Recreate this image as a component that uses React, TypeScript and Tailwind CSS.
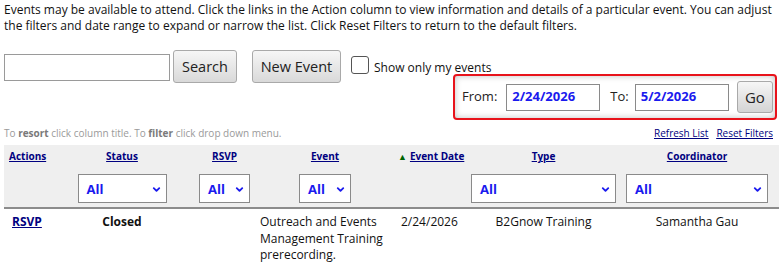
import { ChevronDown } from "lucide-react";

const font = { fontFamily: '"Open Sans", "Liberation Sans", sans-serif' };

function FilterSelect({ className }: { className: string }) {
  return (
    <div
      className={`relative flex h-[29px] items-center border border-[#8a8a8a] bg-white pl-[8px] text-[13px] font-bold text-[#1a1aee] ${className}`}
    >
      All
      <ChevronDown
        className="absolute right-[4px] top-[9px] text-[#1a1aee]"
        size={11}
        strokeWidth={4}
      />
    </div>
  );
}

function HeadLink({ children }: { children: React.ReactNode }) {
  return (
    <a className="whitespace-nowrap font-bold text-[#000080] underline cursor-pointer">
      {children}
    </a>
  );
}

export default function App() {
  return (
    <div className="w-[779px] overflow-hidden bg-white text-black" style={font}>
      <p className="px-[4px] pt-[2px] text-[12px] leading-[16px] text-[#111]">
        Events may be available to attend. Click the links in the Action column to view
        information and details of a particular event. You can adjust the filters and date
        range to expand or narrow the list. Click Reset Filters to return to the default
        filters.
      </p>

      <div className="mt-[16px] flex items-start pl-[4px]">
        <input className="mt-[4px] h-[27px] w-[166px] border border-[#9a9a9a] bg-white" />
        <button className="ml-[3px] h-[33px] w-[64px] rounded-[3px] border border-[#a9a9a9] bg-gradient-to-b from-[#f6f6f6] to-[#d9d9d9] text-[14.5px] text-[#222]">
          Search
        </button>
        <button className="ml-[15px] h-[33px] w-[89px] rounded-[3px] border border-[#a9a9a9] bg-gradient-to-b from-[#f6f6f6] to-[#d9d9d9] text-[14.5px] text-[#222]">
          New Event
        </button>
        <div className="ml-[10px] mt-[6px] flex flex-1 flex-col">
          <label className="flex h-[18px] items-center gap-[5px] text-[12px] text-[#111]">
            <span className="h-[18px] w-[18px] rounded-[3px] border border-[#555] bg-white" />
            <span className="mt-[6px]">Show only my events</span>
          </label>
          <div className="mr-[2px] flex h-[46px] w-[324px] items-center self-end rounded-[4px] border-2 border-[#e8131b] pl-[7px] pr-[2px] shadow-[inset_0_0_6px_rgba(0,0,0,0.25)]">
            <span className="text-[13px] text-[#222]">From:</span>
            <div className="ml-[9px] flex h-[27px] w-[96px] items-center border border-[#8a8a8a] bg-white pl-[5px] text-[13px] font-bold text-[#1a1aee]">
              2/24/2026
            </div>
            <span className="ml-[10px] text-[13px] text-[#222]">To:</span>
            <div className="ml-[6px] flex h-[27px] w-[96px] items-center border border-[#8a8a8a] bg-white pl-[5px] text-[13px] font-bold text-[#1a1aee]">
              5/2/2026
            </div>
            <button className="ml-[8px] h-[32px] w-[37px] rounded-[3px] border border-[#a9a9a9] bg-gradient-to-b from-[#f6f6f6] to-[#d4d4d4] text-[15px] text-[#222]">
              Go
            </button>
          </div>
        </div>
      </div>

      <div className="mt-[6px] flex items-center justify-between pl-[4px] pr-[6px] text-[10px] leading-[14px]">
        <span className="text-[#9a9a9a]">
          To <b className="text-[#7a7a7a]">resort</b> click column title. To{" "}
          <b className="text-[#7a7a7a]">filter</b> click drop down menu.
        </span>
        <span className="flex gap-[8px] text-[#000080] underline">
          <a>Refresh List</a>
          <a>Reset Filters</a>
        </span>
      </div>

      <div className="ml-[4px] mt-[5px]">
        <div className="grid grid-cols-[46px_144px_61px_140px_71px_155px_1fr] border-b-2 border-[#8c8c8c] bg-[#efefef] pb-[4px] pt-[3px] text-[10px] leading-[16px]">
          <div className="pl-[5px]">
            <HeadLink>Actions</HeadLink>
          </div>
          <div className="text-center">
            <HeadLink>Status</HeadLink>
          </div>
          <div className="text-center">
            <HeadLink>RSVP</HeadLink>
          </div>
          <div className="text-center">
            <HeadLink>Event</HeadLink>
          </div>
          <div className="whitespace-nowrap pl-[3px]">
            <span className="mr-[3px] text-[9px] text-[#006400]">▲</span>
            <HeadLink>Event Date</HeadLink>
          </div>
          <div className="text-center">
            <HeadLink>Type</HeadLink>
          </div>
          <div className="pr-[6px] text-center">
            <HeadLink>Coordinator</HeadLink>
          </div>

          <div />
          <div className="mt-[9px] flex justify-center">
            <FilterSelect className="w-[89px]" />
          </div>
          <div className="mt-[9px] flex justify-center">
            <FilterSelect className="w-[51px]" />
          </div>
          <div className="mt-[9px] flex justify-center">
            <FilterSelect className="w-[52px]" />
          </div>
          <div />
          <div className="mt-[9px] flex justify-center">
            <FilterSelect className="w-[145px]" />
          </div>
          <div className="mt-[9px] pl-[5px]">
            <FilterSelect className="w-[142px]" />
          </div>
        </div>

        <div className="grid grid-cols-[46px_144px_61px_140px_71px_155px_1fr] pt-[5px] text-[12px] leading-[16.7px] text-[#111]">
          <div className="pl-[8px]">
            <a className="font-bold text-[#000080] underline">RSVP</a>
          </div>
          <div className="text-center font-bold">Closed</div>
          <div />
          <div className="pl-[5px]">
            Outreach and Events Management Training prerecording.
          </div>
          <div className="pl-[6px]">2/24/2026</div>
          <div className="text-center">B2Gnow Training</div>
          <div className="pr-[6px] text-center">Samantha Gau</div>
        </div>
      </div>
    </div>
  );
}
